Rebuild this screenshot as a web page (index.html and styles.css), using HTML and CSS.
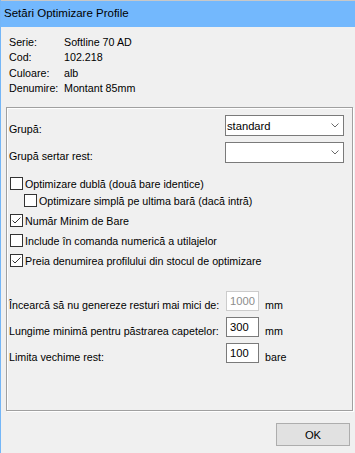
FILE: index.html
```html
<!DOCTYPE html>
<html lang="ro">
<head>
    <meta charset="UTF-8" />
    <title>Setări Optimizare Profile</title>
    <link rel="stylesheet" href="styles.css">
</head>
<body>
    <div class="fereastra">
        <div class="titlu">Setări Optimizare Profile</div>

        <div class="info">
            <span>Serie:</span><span>Softline 70 AD</span>
            <span>Cod:</span><span>102.218</span>
            <span>Culoare:</span><span>alb</span>
            <span>Denumire:</span><span>Montant 85mm</span>
        </div>

        <div class="grup">
            <div class="rand-combo">
                <label>Grupă:</label>
                <div class="combo">
                    <span>standard</span>
                    <svg width="8" height="5" viewBox="0 0 8 5"><polyline points="0.5,0.5 4,4 7.5,0.5" fill="none" stroke="#6a6a6a" stroke-width="1"/></svg>
                </div>
            </div>
            <div class="rand-combo al-doilea">
                <label>Grupă sertar rest:</label>
                <div class="combo">
                    <span></span>
                    <svg width="8" height="5" viewBox="0 0 8 5"><polyline points="0.5,0.5 4,4 7.5,0.5" fill="none" stroke="#6a6a6a" stroke-width="1"/></svg>
                </div>
            </div>

            <div class="bife">
                <label class="bifa"><span class="casuta"></span>Optimizare dublă (două bare identice)</label>
                <label class="bifa indentat"><span class="casuta"></span>Optimizare simplă pe ultima bară (dacă intră)</label>
                <label class="bifa"><span class="casuta"><svg width="11" height="11" viewBox="0 0 11 11"><polyline points="1.5,5.5 4,8 9.5,2.5" fill="none" stroke="#333" stroke-width="1"/></svg></span>Număr Minim de Bare</label>
                <label class="bifa"><span class="casuta"></span>Include în comanda numerică a utilajelor</label>
                <label class="bifa"><span class="casuta"><svg width="11" height="11" viewBox="0 0 11 11"><polyline points="1.5,5.5 4,8 9.5,2.5" fill="none" stroke="#333" stroke-width="1"/></svg></span>Preia denumirea profilului din stocul de optimizare</label>
            </div>

            <div class="valori">
                <label>Încearcă să nu genereze resturi mai mici de:</label>
                <input type="text" value="1000" disabled>
                <span>mm</span>

                <label>Lungime minimă pentru păstrarea capetelor:</label>
                <input type="text" value="300">
                <span>mm</span>

                <label>Limita vechime rest:</label>
                <input type="text" value="100">
                <span>bare</span>
            </div>
        </div>

        <div class="subsol">
            <button type="button">OK</button>
        </div>
    </div>
</body>
</html>
```

FILE: styles.css
```css
* {
    box-sizing: border-box;
}

body {
    margin: 0;
    background: #f0f0f0;
    font-family: 'Liberation Sans', Arial, sans-serif;
    font-size: 10.7px;
    color: #000;
}

.fereastra {
    width: 355px;
    height: 453px;
    border-left: 1px solid #74b6f7;
    display: flex;
    flex-direction: column;
}

/* bara de titlu */
.titlu {
    height: 27px;
    background: #73b8fd;
    border-top: 1px solid #c8c8c8;
    padding-left: 3px;
    font-size: 11.5px;
    line-height: 25px;
}

.info {
    display: grid;
    grid-template-columns: 55px auto;
    line-height: 15.3px;
    padding: 8px 0 0 8px;
}

/* chenarul cu optiuni */
.grup {
    margin: 11px 2px 0 5px;
    height: 304px;
    border: 1px solid #a0a0a0;
    box-shadow: inset 1px 1px 0 #fff, 1px 1px 0 #fff;
    padding: 7px 8px 0 2px;
}

.rand-combo {
    display: flex;
    justify-content: space-between;
    align-items: flex-start;
}

.rand-combo label {
    padding-top: 7px;
    line-height: 15px;
}

.rand-combo.al-doilea {
    margin-top: 5px;
}

.combo {
    width: 119px;
    height: 21px;
    background: #fff;
    border: 1px solid #7a7a7a;
    display: flex;
    justify-content: space-between;
    align-items: center;
    padding: 0 4px 0 1px;
    font-size: 11.2px;
}

.bife {
    display: flex;
    flex-direction: column;
    gap: 5px;
    margin-top: 12px;
}

.bifa {
    display: flex;
    align-items: center;
    gap: 2px;
    height: 15px;
    margin-left: 1px;
}

.bifa.indentat {
    margin-left: 15px;
    margin-top: -3px;
}

.casuta {
    width: 13px;
    height: 13px;
    border: 1px solid #333;
    background: #fff;
    display: flex;
}

.valori {
    display: grid;
    grid-template-columns: 217px 33px auto;
    row-gap: 4px;
    margin-top: 23px;
}

.valori label,
.valori span {
    padding-top: 7px;
    line-height: 15px;
}

.valori span {
    padding-left: 6px;
}

.valori input {
    width: 33px;
    height: 20px;
    margin: 0;
    border: 1px solid #7a7a7a;
    background: #fff;
    padding: 0 3px;
    font-family: inherit;
    font-size: 11.2px;
    color: #000;
}

.valori input:disabled {
    border-color: #cccccc;
    color: #8d8d8d;
}

.subsol {
    display: flex;
    justify-content: flex-end;
    padding: 12px 5px 0 0;
}

.subsol button {
    width: 74px;
    height: 23px;
    background: #e1e1e1;
    border: 1px solid #adadad;
    font-family: inherit;
    font-size: 11.2px;
    color: #000;
}
```
